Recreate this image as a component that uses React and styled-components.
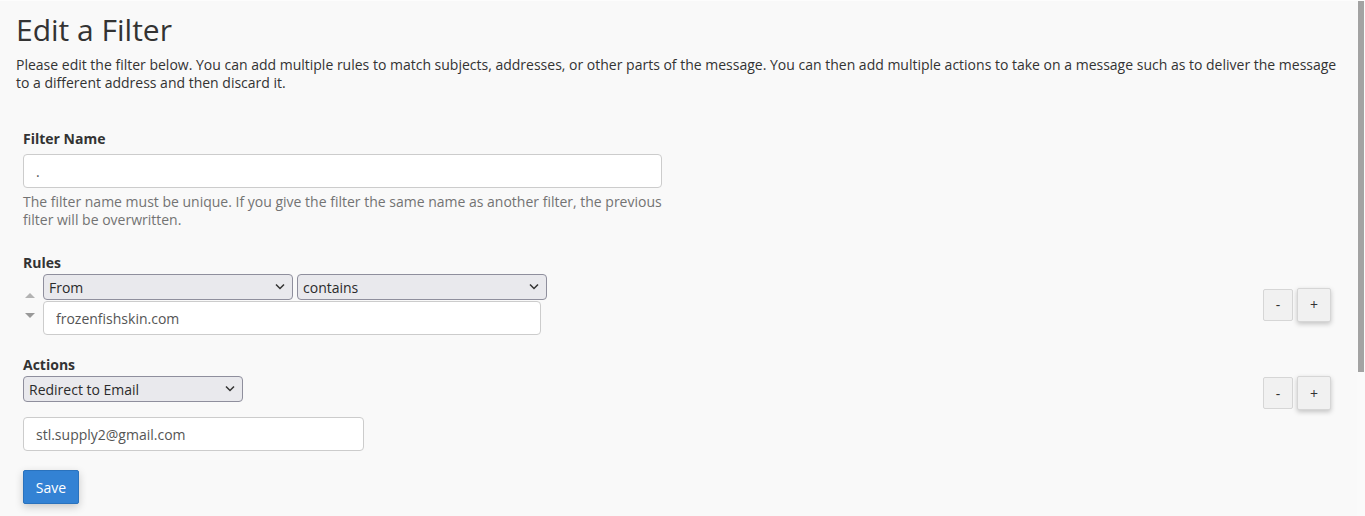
import React from 'react';
import styled, { createGlobalStyle } from 'styled-components';

const GlobalStyle = createGlobalStyle`
  html, body {
    margin: 0;
    padding: 0;
    background: #f9f9f9;
    font-family: "Open Sans", "Liberation Sans", sans-serif;
    color: #333;
    overflow: hidden;
  }
`;

const Page = styled.div`
  position: relative;
  height: 516px;
  box-sizing: border-box;
  border-top: 1px solid #fdfdfd;
  padding: 0 24px 0 16px;
  background: #f9f9f9;
`;

const Title = styled.h1`
  margin: 0;
  padding-top: 11px;
  font-size: 30px;
  font-weight: 400;
  line-height: 36px;
  color: #333;
`;

const Intro = styled.p`
  margin: 8px 0 0;
  font-size: 14px;
  line-height: 18px;
  color: #333;
`;

const Form = styled.form`
  padding: 37px 0 0 7px;
`;

const Group = styled.div`
  margin-bottom: ${(p) => p.$gap || 0}px;
`;

const Label = styled.div`
  font-size: 14px;
  font-weight: 700;
  line-height: 20px;
  margin-bottom: ${(p) => p.$mb || 4}px;
`;

const TextInput = styled.input`
  display: block;
  box-sizing: border-box;
  width: ${(p) => p.$w}px;
  height: 34px;
  padding: 6px 12px;
  border: 1px solid #ccc;
  border-radius: 4px;
  background: #fff;
  font-family: inherit;
  font-size: 14px;
  color: #555;
  outline: none;
`;

const Help = styled.div`
  width: 645px;
  margin-top: 5px;
  font-size: 14px;
  line-height: 18px;
  color: #737373;
`;

const Row = styled.div`
  display: flex;
  justify-content: space-between;
  align-items: ${(p) => p.$align || 'center'};
  padding-right: 10px;
`;

const RuleLeft = styled.div`
  display: flex;
  align-items: center;
  gap: 6px;
`;

const Arrows = styled.div`
  display: flex;
  flex-direction: column;
  align-items: center;
  gap: 15px;
  width: 14px;
  padding-top: 2px;
`;

const Tri = styled.span`
  width: 0;
  height: 0;
  border-left: 5px solid transparent;
  border-right: 5px solid transparent;
  ${(p) =>
    p.$up
      ? 'border-bottom: 5px solid #b3b3b3;'
      : 'border-top: 5px solid #999;'}
`;

const Fields = styled.div`
  display: flex;
  flex-direction: column;
`;

const SelectRow = styled.div`
  display: flex;
  gap: 4px;
  margin-bottom: 1px;
`;

const SelectWrap = styled.div`
  position: relative;
  width: ${(p) => p.$w}px;
  height: 26px;
`;

const Select = styled.select`
  appearance: none;
  box-sizing: border-box;
  width: 100%;
  height: 100%;
  padding: 0 20px 0 5px;
  border: 1px solid #8f8f9d;
  border-radius: 4px;
  background: #e9e9ed;
  font-family: inherit;
  font-size: 14px;
  color: #2b2b2b;
  outline: none;
`;

const Chevron = styled.svg`
  position: absolute;
  right: 8px;
  top: 9px;
  pointer-events: none;
`;

const Buttons = styled.div`
  display: flex;
  align-items: center;
  gap: 4px;
`;

const SmallBtn = styled.button`
  box-sizing: border-box;
  width: ${(p) => (p.$primary ? 34 : 30)}px;
  height: ${(p) => (p.$primary ? 34 : 32)}px;
  border: 1px solid #d6d6d6;
  border-radius: 2px;
  background: #f1f1f1;
  color: #333;
  font-family: inherit;
  font-size: 14px;
  padding: 0;
  box-shadow: ${(p) => (p.$primary ? '0 2px 5px rgba(0,0,0,0.22)' : 'none')};
`;

const ActionSpacer = styled.div`
  height: 15px;
`;

const SaveBtn = styled.button`
  margin-top: 19px;
  width: 56px;
  height: 34px;
  border: 1px solid #2a72bd;
  border-radius: 2px;
  background: #3382d4;
  color: #fff;
  font-family: inherit;
  font-size: 14px;
  padding: 0;
  box-shadow: 0 3px 8px rgba(0, 0, 0, 0.2);
`;

const Scrollbar = styled.div`
  position: absolute;
  top: 0;
  right: 0;
  width: 8px;
  height: 516px;
  background: #fafafa;
`;

const Thumb = styled.div`
  margin-left: 1px;
  width: 6px;
  height: 371px;
  background: #a3a3a3;
`;

function DropSelect({ width, value }) {
  return (
    <SelectWrap $w={width}>
      <Select defaultValue={value}>
        <option>{value}</option>
      </Select>
      <Chevron width="10" height="7" viewBox="0 0 10 7">
        <path d="M1 1.5 L5 5.5 L9 1.5" fill="none" stroke="#333" strokeWidth="1.5" />
      </Chevron>
    </SelectWrap>
  );
}

function App() {
  return (
    <>
      <GlobalStyle />
      <Page>
        <Title>Edit a Filter</Title>
        <Intro>
          Please edit the filter below. You can add multiple rules to match subjects, addresses, or other
          parts of the message. You can then add multiple actions to take on a message such as to deliver
          the message to a different address and then discard it.
        </Intro>
        <Form onSubmit={(e) => e.preventDefault()}>
          <Group $gap={24}>
            <Label $mb={5}>Filter Name</Label>
            <TextInput $w={639} defaultValue="." />
            <Help>
              The filter name must be unique. If you give the filter the same name as another filter, the
              previous filter will be overwritten.
            </Help>
          </Group>
          <Group $gap={20}>
            <Label $mb={1}>Rules</Label>
            <Row>
              <RuleLeft>
                <Arrows>
                  <Tri $up />
                  <Tri />
                </Arrows>
                <Fields>
                  <SelectRow>
                    <DropSelect width={250} value="From" />
                    <DropSelect width={250} value="contains" />
                  </SelectRow>
                  <TextInput $w={498} defaultValue="frozenfishskin.com" />
                </Fields>
              </RuleLeft>
              <Buttons>
                <SmallBtn type="button">-</SmallBtn>
                <SmallBtn type="button" $primary>+</SmallBtn>
              </Buttons>
            </Row>
          </Group>
          <Group>
            <Label $mb={1}>Actions</Label>
            <Row $align="flex-start">
              <Fields>
                <DropSelect width={220} value="Redirect to Email" />
                <ActionSpacer />
                <TextInput $w={341} defaultValue="stl.supply2@gmail.com" />
              </Fields>
              <Buttons>
                <SmallBtn type="button">-</SmallBtn>
                <SmallBtn type="button" $primary>+</SmallBtn>
              </Buttons>
            </Row>
          </Group>
          <SaveBtn type="submit">Save</SaveBtn>
        </Form>
        <Scrollbar>
          <Thumb />
        </Scrollbar>
      </Page>
    </>
  );
}

export default App;
